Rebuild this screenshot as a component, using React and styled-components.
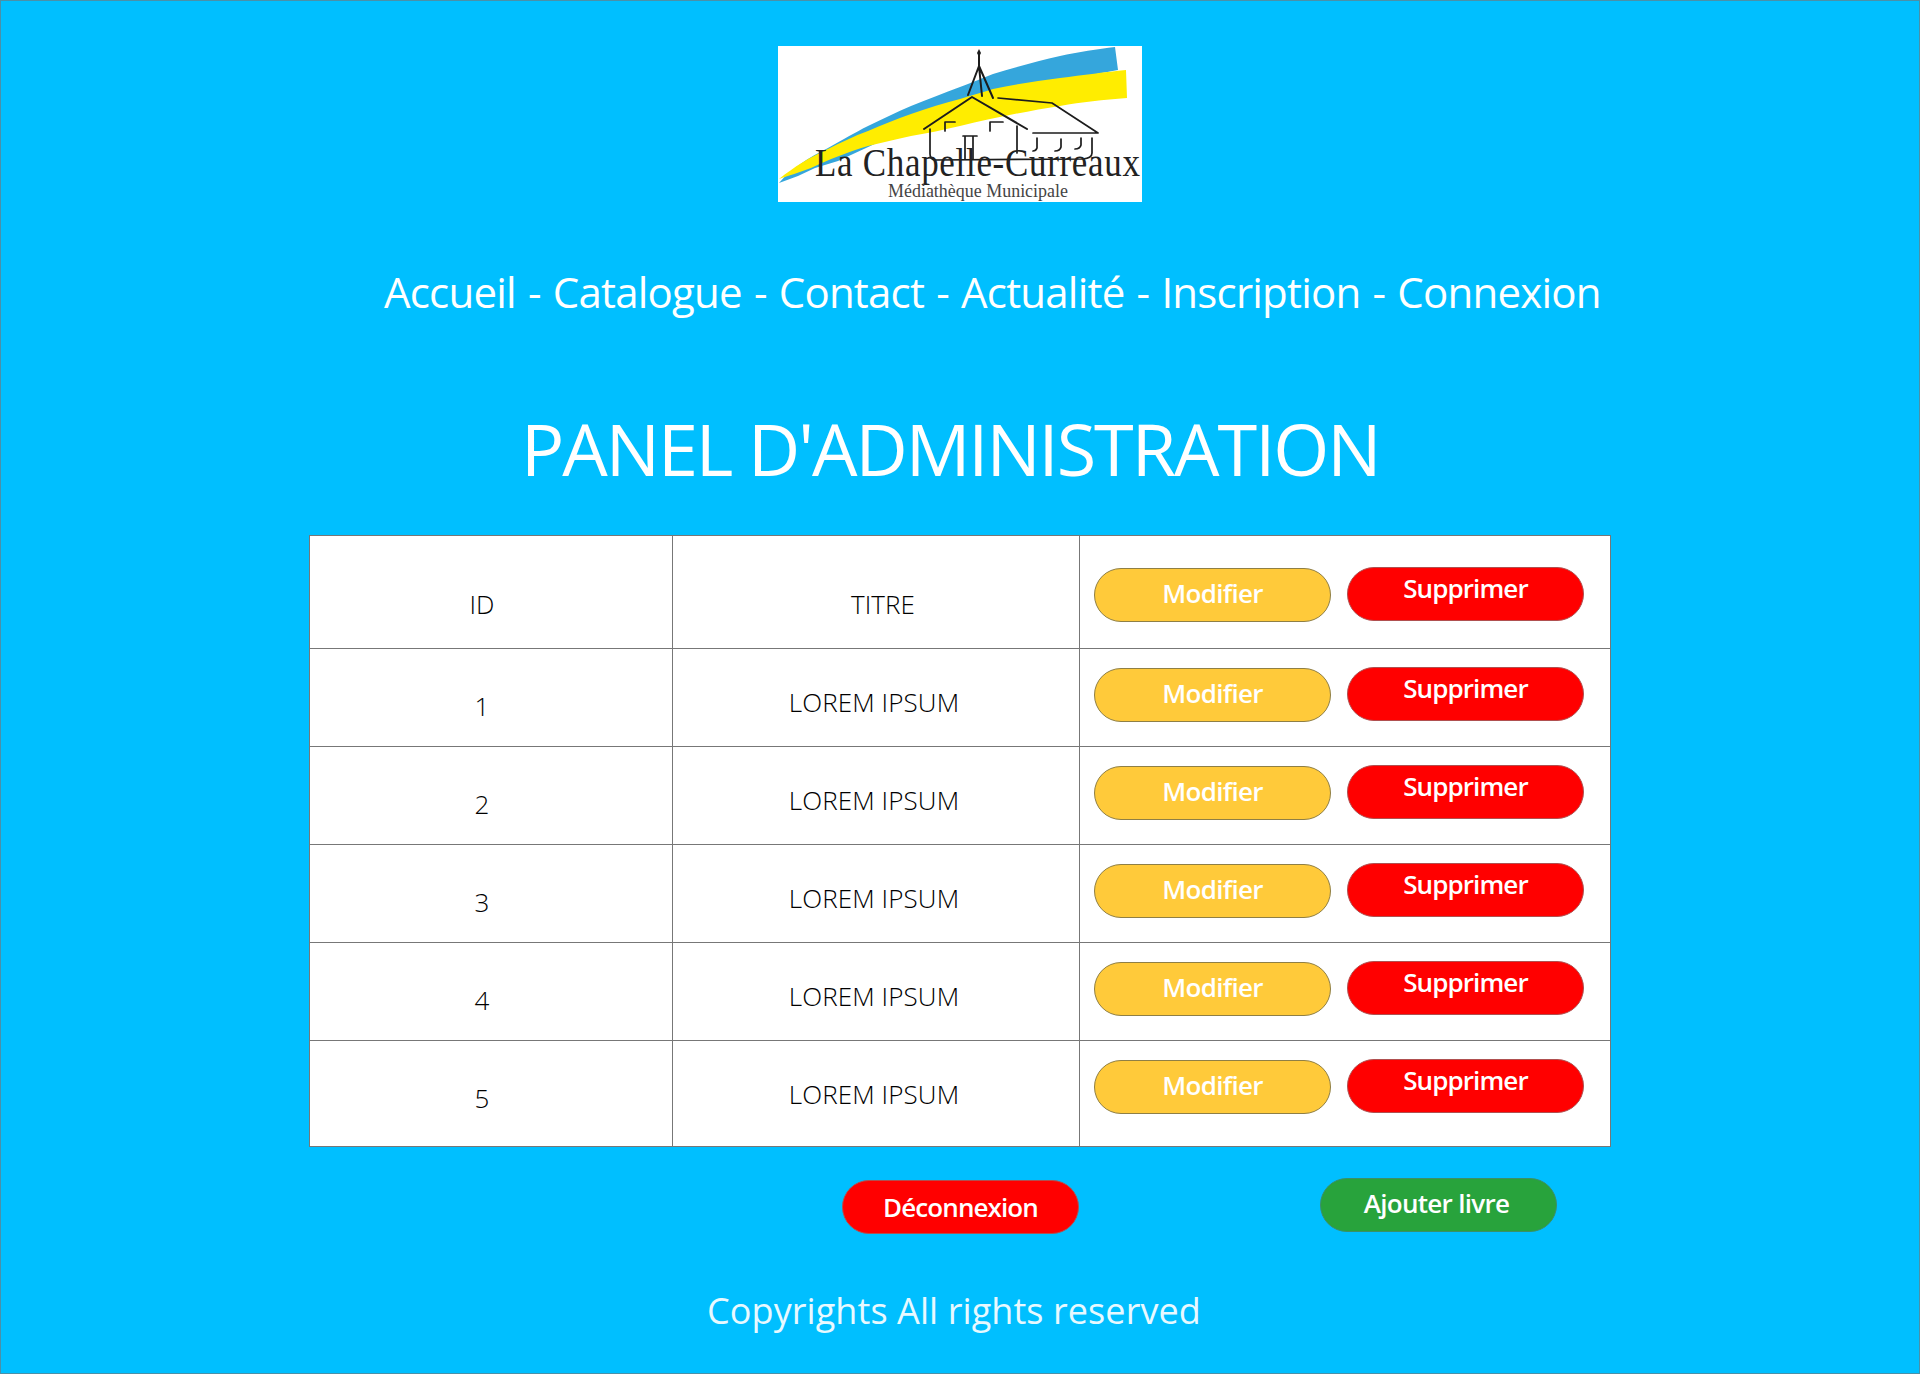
import React from 'react';
import styled, { createGlobalStyle } from 'styled-components';

const Global = createGlobalStyle`
  html, body { margin: 0; padding: 0; background: #00bfff; }
  * { box-sizing: border-box; }
`;

const Page = styled.div`
  width: 1920px;
  height: 1374px;
  background: #00bfff;
  border: 1px solid #4a90a8;
  font-family: "Open Sans", "Noto Sans", sans-serif;
  display: flex;
  flex-direction: column;
  overflow: hidden;
`;

const LogoWrap = styled.div`
  margin: 45px 0 0 777px;
  width: 364px;
  height: 156px;
  background: #fff;
  flex: none;
`;

const Nav = styled.nav`
  margin: 65px 0 0 383px;
  height: 50px;
  font-size: 42px;
  line-height: 50px;
  font-weight: 500;
  letter-spacing: -0.79px;
  word-spacing: 2px;
  color: #fff;
  white-space: nowrap;
`;

const Title = styled.h1`
  margin: 86px 0 0 520px;
  height: 90px;
  font-size: 72px;
  line-height: 90px;
  font-weight: 400;
  letter-spacing: -2.05px;
  color: #fff;
  white-space: nowrap;
`;

const Table = styled.table`
  margin: 42px 0 0 308px;
  width: 1301px;
  table-layout: fixed;
  border-collapse: collapse;
  background: #fff;
  flex: none;
`;

const Row = styled.tr`
  height: ${(p) => p.$h}px;
`;

const Cell = styled.td`
  border: 1px solid #777;
  padding: 0;
  vertical-align: top;
  text-align: center;
  color: #000;
  font-size: 26px;
  line-height: 34px;
  letter-spacing: 0.1px;
  font-weight: 300;
`;

const CellText = styled.div`
  padding-top: ${(p) => p.$top}px;
  padding-right: ${(p) => p.$right || 0}px;
  padding-left: ${(p) => p.$left || 0}px;
`;

const Actions = styled.div`
  display: flex;
  gap: 16px;
  padding-left: 14px;
  align-items: flex-start;
  padding-top: ${(p) => p.$top}px;
`;

const Pill = styled.button`
  width: 237px;
  height: 54px;
  padding: 0 ${(p) => p.$nudge || 0}px ${(p) => p.$lift || 0}px 0;
  border-radius: 27px;
  border: 1px solid ${(p) => p.$line};
  background: ${(p) => p.$bg};
  color: #fff;
  font-family: inherit;
  font-size: 26px;
  font-weight: ${(p) => p.$weight || 500};
  letter-spacing: ${(p) => p.$track ?? -0.9}px;
  line-height: 34px;
  flex: none;
  margin-top: ${(p) => p.$down || 0}px;
`;

const BottomBar = styled.div`
  display: flex;
  align-items: flex-start;
  margin: 31px 0 0 841px;
  gap: 241px;
  flex: none;
`;

const Footer = styled.footer`
  margin: 52px 0 0 0;
  padding-right: 12px;
  text-align: center;
  font-size: 36px;
  line-height: 50px;
  font-weight: 400;
  letter-spacing: 0.08px;
  color: #e8f9ff;
`;

const Logo = () => (
  <svg width="364" height="156" viewBox="0 0 364 156" style={{ display: 'block' }}>
    <path d="M1 137 C 14 122 30 112 50 102 C 66 93 76 87 90 80 C 105 73 118 66 133 60 C 150 53 166 47 182 41 C 195 36 205 32 215 28 C 238 21 260 15 282 10 C 300 6 320 3 337 1 L 340 24 L 200 50 L 60 115 L 37 122 L 20 130 Z" fill="#35a6dc" />
    <path d="M1 133 C 16 121 32 111 50 103 C 62 97 76 90 90 85 C 104 79 118 73 133 68 C 150 62 166 57 182 53 C 192 50 205 46 215 43 C 238 38 260 35 282 32 C 305 29 328 26 348 24 L 349 52 C 325 54 304 56 282 60 C 250 65 215 72 182 80 C 165 84 150 87 133 90 C 118 93 104 97 90 100 C 70 106 50 114 33 122 C 22 126 10 130 1 133 Z" fill="#ffed00" />
    <g fill="none" stroke="#1c1c1c" strokeWidth="1.7" strokeLinecap="round" strokeLinejoin="round">
      <path d="M190 49 L201 20 L215 52 M201 20 L204 50 M201 8 L201 20" strokeWidth="2" />
      <path d="M146 83 L194 51 L249 83" strokeWidth="2" />
      <path d="M220 52 L274 57 L320 87 L255 87" />
      <path d="M152 83 L152 108 Q152 114 158 114 L305 113 Q314 112 314 107 L314 92" />
      <path d="M167 85 L167 76 L177 76 M212 85 L212 76 L225 76 M239 80 L239 107" />
      <path d="M185 90 L199 90 M187 90 L187 113 M195 90 L195 113" />
      <path d="M259 92 L259 102 Q258 105 255 105 M283 93 L283 101 Q282 105 277 105 M303 92 L303 99 Q302 103 297 103" />
    </g>
    <path d="M201 3 L203 7 L201 11 L199 7 Z" fill="#1c1c1c" />
    <text transform="translate(37 130) scale(1 1.12)" fontFamily="'Liberation Serif', serif" fontSize="35" fill="#222" textLength="325" lengthAdjust="spacing">La Chapelle-Curreaux</text>
    <text x="110" y="151" fontFamily="'Liberation Serif', serif" fontSize="18" fill="#444" textLength="180" lengthAdjust="spacingAndGlyphs">Médiathèque Municipale</text>
  </svg>
);

const ActionPair = ({ top }) => (
  <Actions $top={top}>
    <Pill $bg="#ffca3a" $line="#8f7f45" $down={1} $weight={600} $track={-0.7} $lift={4}>Modifier</Pill>
    <Pill $bg="#ff0000" $line="#b05050" $lift={13} $weight={600}>Supprimer</Pill>
  </Actions>
);

const rows = [
  { id: '1', h: 98 },
  { id: '2', h: 98 },
  { id: '3', h: 98 },
  { id: '4', h: 98 },
  { id: '5', h: 106 },
];

export default function App() {
  return (
    <Page>
      <Global />
      <LogoWrap><Logo /></LogoWrap>
      <Nav>Accueil - Catalogue - Contact - Actualité - Inscription - Connexion</Nav>
      <Title>PANEL D'ADMINISTRATION</Title>
      <Table>
        <colgroup>
          <col style={{ width: 363 }} />
          <col style={{ width: 407 }} />
          <col style={{ width: 531 }} />
        </colgroup>
        <tbody>
          <Row $h={113}>
            <Cell><CellText $top={51} $right={18}>ID</CellText></Cell>
            <Cell><CellText $top={51} $left={14}>TITRE</CellText></Cell>
            <Cell><ActionPair top={31} /></Cell>
          </Row>
          {rows.map((r) => (
            <Row key={r.id} $h={r.h}>
              <Cell><CellText $top={40} $right={18}>{r.id}</CellText></Cell>
              <Cell><CellText $top={36} $right={4}>LOREM IPSUM</CellText></Cell>
              <Cell><ActionPair top={18} /></Cell>
            </Row>
          ))}
        </tbody>
      </Table>
      <BottomBar>
        <Pill $bg="#ff0000" $line="#b05050" $weight={600} style={{ marginTop: 2 }}>Déconnexion</Pill>
        <Pill $bg="#28a33c" $line="#3b8f6a" $weight={600} $track={-0.7} $lift={5} $nudge={4}>Ajouter livre</Pill>
      </BottomBar>
      <Footer>Copyrights All rights reserved</Footer>
    </Page>
  );
}
